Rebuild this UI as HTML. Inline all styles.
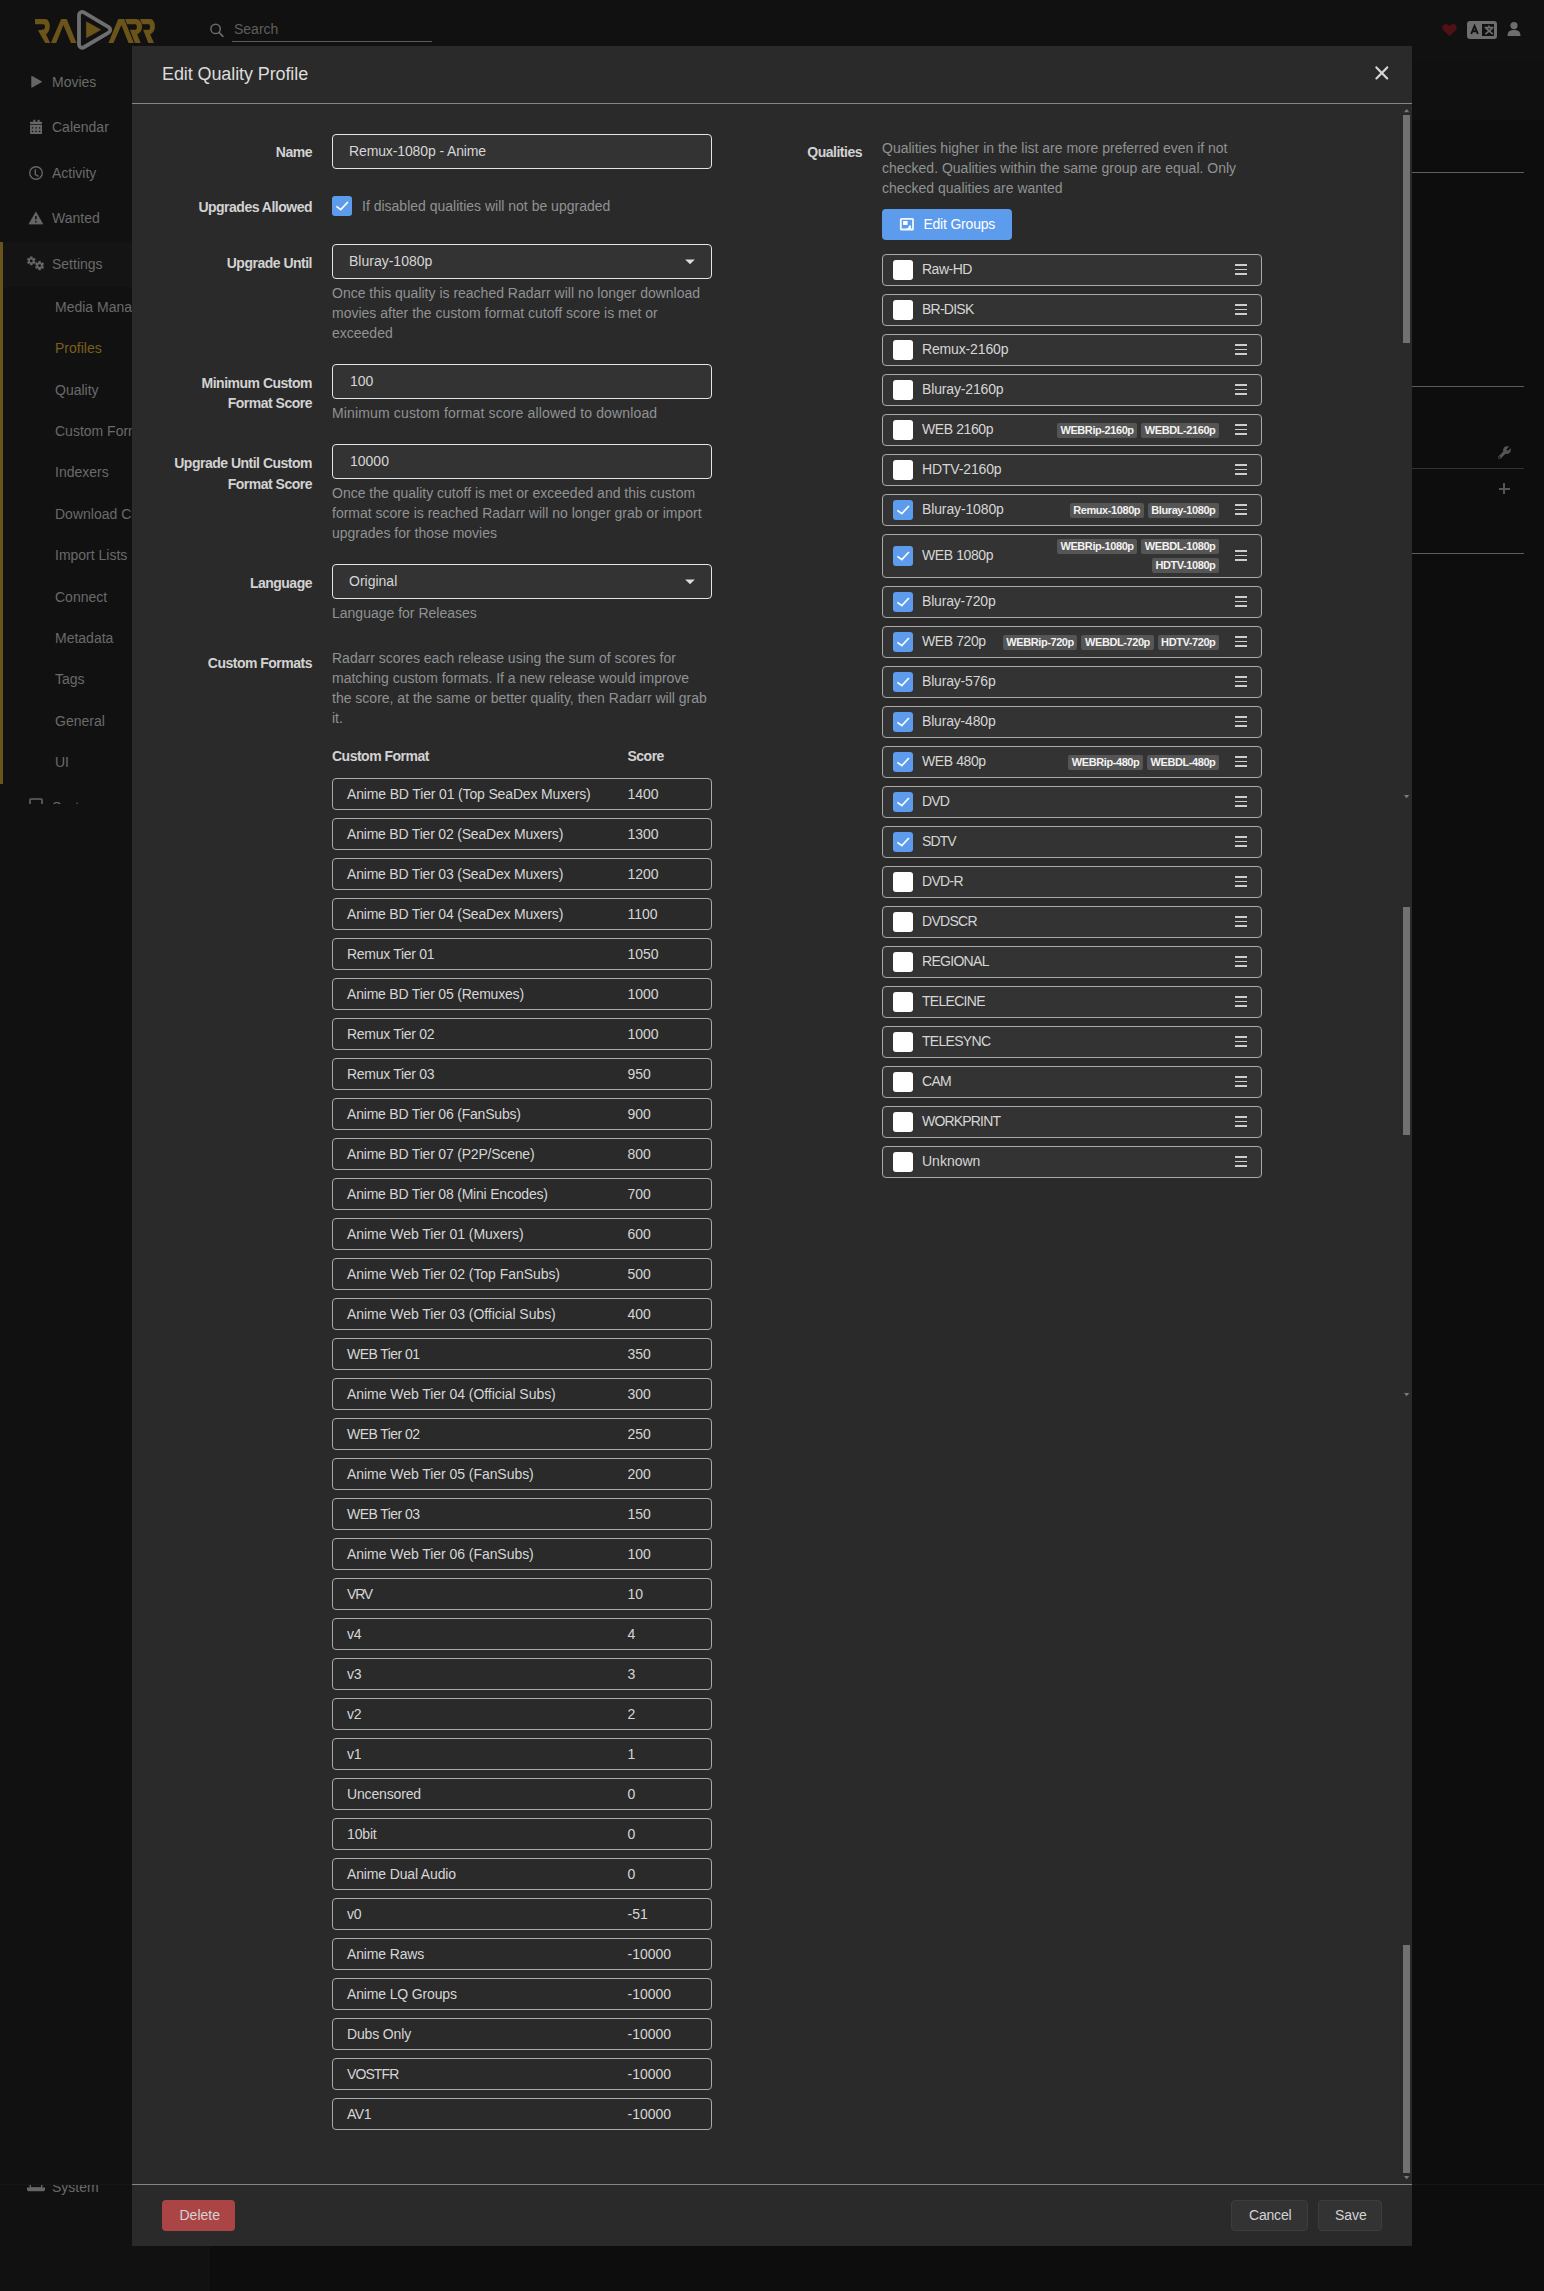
<!DOCTYPE html>
<html><head><meta charset="utf-8"><title>Edit Quality Profile</title>
<style>
html,body{margin:0;padding:0;}
body{width:1544px;height:2291px;background:#0d0d0d;position:relative;overflow:hidden;font-family:"Liberation Sans", sans-serif;}
.t{position:absolute;white-space:nowrap;}
.r{position:absolute;}
.tagrow{position:absolute;display:flex;gap:4px;height:15px;}
.tag{display:block;height:15px;line-height:15px;padding:0 3.6px;background:#555;color:#f2f2f2;font-size:11px;font-weight:700;border-radius:2px;letter-spacing:-0.42px;}
</style></head><body>
<div class="r" style="left:0px;top:0px;width:1544px;height:60px;background:#111111;"></div>
<div class="r" style="left:0px;top:60px;width:210px;height:2231px;background:#111111;"></div>
<div class="r" style="left:210px;top:60px;width:1334px;height:60px;background:#101010;"></div>
<div class="r" style="left:1412px;top:172px;width:112px;height:1px;background:#5e5e5e;"></div>
<div class="r" style="left:1412px;top:386px;width:112px;height:1px;background:#5c5c5c;"></div>
<div class="r" style="left:1412px;top:468px;width:112px;height:1px;background:#333333;"></div>
<div class="r" style="left:1412px;top:553px;width:112px;height:1px;background:#5e5e5e;"></div>
<svg class="r" style="left:1496.5px;top:445px;" width="16" height="16" viewBox="0 0 16 16"><path d="M13.5 3.2 L11.2 5.5 L9.8 5.4 L9.7 4 L12 1.7 C10.3 0.9 8.2 1.3 7 2.7 C6 3.8 5.8 5.3 6.3 6.6 L1.6 11.3 C1 11.9 1 12.9 1.6 13.5 C2.2 14.1 3.2 14.1 3.8 13.5 L8.5 8.8 C9.8 9.3 11.3 9.1 12.4 8.1 C13.8 6.9 14.2 4.9 13.5 3.2 Z" fill="#555"/><circle cx="2.7" cy="12.4" r="0.8" fill="#0d0d0d"/></svg>
<div class="r" style="left:1498.6px;top:488.2px;width:11px;height:1.6px;background:#555;"></div>
<div class="r" style="left:1503.3px;top:483.2px;width:1.6px;height:11.2px;background:#555;"></div>
<svg class="r" style="left:0px;top:0px;" width="200" height="60" viewBox="0 0 200 60">
<path d="M35,19 H45.2 C48,19 49.8,22.5 49.8,26.5 C49.8,30 48.2,32.8 46,34.3 L50.2,43 H45.2 L37.9,30.2 L43.5,29.5 C44.5,29 45,28 45,27 C45,25.3 44.5,24.2 43.5,24.2 H35 Z" fill="#6b5419"/>
<polygon points="50.9,43 61.2,19 66.7,19 76.5,43 71,43 63.4,25 56.2,43" fill="#6b5419"/>
<path d="M83.83,12.36 L108.65,27.05 A3.2,3.2 0 0 1 108.65,32.55 L83.83,47.24 A3.2,3.2 0 0 1 79.00,44.49 L79.00,15.11 A3.2,3.2 0 0 1 83.83,12.36 Z" fill="none" stroke="#6f6f6f" stroke-width="3.8"/>
<polygon points="86.4,21.8 86.4,37.8 100.7,29.8" fill="#6b5419" stroke="#6b5419" stroke-width="0.6" stroke-linejoin="round"/>
<polygon points="108.4,43 118.2,19 124.2,19 133.9,43 128.5,43 121.4,25 113.5,43" fill="#6b5419"/>
<path d="M125,19 H136 C139.5,19 142.05,22.3 142.05,26.5 C142.05,30.2 140,33.3 137.1,34.3 L140.8,43 H134.9 L129.9,29.7 H135.3 C136.2,29.7 136.9,28.5 136.9,27 C136.9,25.5 136.2,24.3 135.3,24.3 H127.1 Z" fill="#6b5419"/>
<path d="M139.9,19 H150.2 C153,19 154.9,22.3 154.9,26.5 C154.9,30.2 153,33.3 150.1,34.3 L154,43 H148.3 L143.1,29.7 H148.8 C149.6,29.7 150,28.5 150,27 C150,25.5 149.6,24.3 148.8,24.3 H142.4 Z" fill="#6b5419"/>
</svg>
<svg class="r" style="left:205px;top:18px;" width="24" height="24" viewBox="0 0 24 24"><circle cx="10.6" cy="10.9" r="4.7" fill="none" stroke="#6a6a6a" stroke-width="1.5"/><line x1="14" y1="14.4" x2="17.9" y2="18.3" stroke="#6a6a6a" stroke-width="1.7" stroke-linecap="round"/></svg>
<div class="t" style="left:234px;top:19.0px;font-size:14px;line-height:20px;color:#5e5e5e;">Search</div>
<div class="r" style="left:232px;top:41px;width:200px;height:1px;background:#5a5a5a;"></div>
<svg class="r" style="left:1441px;top:22px;" width="17" height="16" viewBox="0 0 17 16"><path d="M8.5 14.3 L2.6 8.6 C0.6 6.6 1 3.2 3.6 2.3 C5.4 1.7 7.3 2.5 8.5 4 C9.7 2.5 11.6 1.7 13.4 2.3 C16 3.2 16.4 6.6 14.4 8.6 Z" fill="#4f1016"/></svg>
<div class="r" style="left:1467px;top:21px;width:30px;height:18px;background:#6e6e6e;border-radius:3px"></div>
<div class="r" style="left:1482px;top:24px;width:12px;height:12px;background:#111;"></div>
<svg class="r" style="left:1467px;top:21px;" width="30" height="18" viewBox="0 0 30 18"><path d="M4.2 13 L7.55 4.9 L10.9 13 M5.5 10.2 H9.6" fill="none" stroke="#111" stroke-width="1.9"/><path d="M17.6 6.6 H26.4 M22 4.4 V6.6 M19.2 7.4 L25.8 13.2 M25.2 7.4 L18.4 13.2" fill="none" stroke="#6e6e6e" stroke-width="1.6"/></svg>
<svg class="r" style="left:1506px;top:21px;" width="16" height="16" viewBox="0 0 16 16"><circle cx="8" cy="4.6" r="3.6" fill="#6e6e6e"/><path d="M1.5 15 C1.5 10.5 4 9 8 9 C12 9 14.5 10.5 14.5 15 Z" fill="#6e6e6e"/></svg>
<div class="r" style="left:0px;top:242px;width:3px;height:542px;background:#6b5419;"></div>
<div class="r" style="left:3px;top:242px;width:207px;height:45px;background:#141414;"></div>
<div class="t" style="left:52px;top:72.0px;font-size:14px;line-height:20px;color:#6a6a6a;">Movies</div>
<div class="t" style="left:52px;top:117.0px;font-size:14px;line-height:20px;color:#6a6a6a;">Calendar</div>
<div class="t" style="left:52px;top:163.0px;font-size:14px;line-height:20px;color:#6a6a6a;">Activity</div>
<div class="t" style="left:52px;top:208.0px;font-size:14px;line-height:20px;color:#6a6a6a;">Wanted</div>
<div class="t" style="left:52px;top:254.0px;font-size:14px;line-height:20px;color:#6a6a6a;">Settings</div>
<svg class="r" style="left:28px;top:74px;" width="16" height="16" viewBox="0 0 16 16"><path d="M3.3 2.6 Q3.3 1.6 4.2 2.1 L13.6 7.3 Q14.4 7.8 13.6 8.3 L4.2 13.6 Q3.3 14.1 3.3 13.1 Z" fill="#666"/></svg>
<svg class="r" style="left:28px;top:117px;" width="16" height="18" viewBox="0 0 16 18"><rect x="2.1" y="4.8" width="11.9" height="2.4" fill="#666"/><rect x="5.3" y="2.8" width="2" height="2.5" fill="#666"/><rect x="9.6" y="2.8" width="2" height="2.5" fill="#666"/><rect x="2.1" y="7.9" width="11.9" height="9.1" fill="#666"/><rect x="3.8" y="10.2" width="1.4" height="1.4" fill="#111"/><rect x="3.8" y="13.7" width="1.4" height="1.4" fill="#111"/><rect x="7.4" y="10.2" width="1.4" height="1.4" fill="#111"/><rect x="7.4" y="13.7" width="1.4" height="1.4" fill="#111"/><rect x="10.9" y="10.2" width="1.4" height="1.4" fill="#111"/><rect x="10.9" y="13.7" width="1.4" height="1.4" fill="#111"/></svg>
<svg class="r" style="left:28px;top:165px;" width="16" height="16" viewBox="0 0 16 16"><circle cx="8" cy="8" r="6.3" fill="none" stroke="#666" stroke-width="1.4"/><path d="M7.3 4.2 V9.6 L10.6 11.3" fill="none" stroke="#666" stroke-width="1.4"/></svg>
<svg class="r" style="left:28px;top:210px;" width="16" height="16" viewBox="0 0 16 16"><path d="M7.9 1.9 L14.9 14.1 H0.9 Z" fill="#666" stroke="#666" stroke-width="0.6" stroke-linejoin="round"/><rect x="7.15" y="6" width="1.5" height="3.5" fill="#111"/><rect x="7.15" y="11" width="1.5" height="1.5" fill="#111"/></svg>
<svg class="r" style="left:24px;top:252px;" width="24" height="24" viewBox="0 0 24 24"><polygon points="6.33,4.71 8.27,4.71 8.40,6.19 9.10,6.60 10.44,5.97 11.41,7.64 10.20,8.49 10.20,9.31 11.41,10.16 10.44,11.83 9.10,11.20 8.40,11.61 8.27,13.09 6.33,13.09 6.20,11.61 5.50,11.20 4.16,11.83 3.19,10.16 4.40,9.31 4.40,8.49 3.19,7.64 4.16,5.97 5.50,6.60 6.20,6.19" fill="#666" stroke="#666" stroke-width="0.5" stroke-linejoin="round"/><circle cx="7.3" cy="8.9" r="1.35" fill="#111"/><polygon points="14.59,9.22 16.61,9.22 16.75,10.76 17.48,11.19 18.89,10.53 19.90,12.28 18.63,13.17 18.63,14.03 19.90,14.92 18.89,16.67 17.48,16.01 16.75,16.44 16.61,17.98 14.59,17.98 14.45,16.44 13.72,16.01 12.31,16.67 11.30,14.92 12.57,14.03 12.57,13.17 11.30,12.28 12.31,10.53 13.72,11.19 14.45,10.76" fill="#666" stroke="#666" stroke-width="0.5" stroke-linejoin="round"/><circle cx="15.6" cy="13.6" r="1.35" fill="#111"/></svg>
<div class="t" style="left:55px;top:297.0px;font-size:14px;line-height:20px;color:#6a6a6a;">Media Management</div>
<div class="t" style="left:55px;top:338.0px;font-size:14px;line-height:20px;color:#7a5f1c;">Profiles</div>
<div class="t" style="left:55px;top:380.0px;font-size:14px;line-height:20px;color:#6a6a6a;">Quality</div>
<div class="t" style="left:55px;top:421.0px;font-size:14px;line-height:20px;color:#6a6a6a;">Custom Formats</div>
<div class="t" style="left:55px;top:462.0px;font-size:14px;line-height:20px;color:#6a6a6a;">Indexers</div>
<div class="t" style="left:55px;top:504.0px;font-size:14px;line-height:20px;color:#6a6a6a;">Download Clients</div>
<div class="t" style="left:55px;top:545.0px;font-size:14px;line-height:20px;color:#6a6a6a;">Import Lists</div>
<div class="t" style="left:55px;top:587.0px;font-size:14px;line-height:20px;color:#6a6a6a;">Connect</div>
<div class="t" style="left:55px;top:628.0px;font-size:14px;line-height:20px;color:#6a6a6a;">Metadata</div>
<div class="t" style="left:55px;top:669.0px;font-size:14px;line-height:20px;color:#6a6a6a;">Tags</div>
<div class="t" style="left:55px;top:711.0px;font-size:14px;line-height:20px;color:#6a6a6a;">General</div>
<div class="t" style="left:55px;top:752.0px;font-size:14px;line-height:20px;color:#6a6a6a;">UI</div>
<div class="r" style="left:0;top:784px;width:132px;height:20px;overflow:hidden">
<svg class="r" style="left:28px;top:14px" width="16" height="16" viewBox="0 0 16 16"><rect x="2" y="1" width="12" height="9" rx="1" fill="none" stroke="#666" stroke-width="1.6"/></svg>
<div class="t" style="left:52px;top:12.5px;font-size:14px;line-height:20px;color:#6a6a6a">System</div>
</div>
<div class="r" style="left:0px;top:2184px;width:1544px;height:1px;background:#171717;"></div>
<div class="r" style="left:0;top:2185px;width:132px;height:20px;overflow:hidden">
<svg class="r" style="left:27px;top:-11px" width="18" height="20" viewBox="0 0 18 20"><rect x="3.3" y="5" width="11.4" height="9" fill="none" stroke="#666" stroke-width="1.4"/><path d="M0 13.6 H18 V15.6 Q18 17.2 16.4 17.2 H1.6 Q0 17.2 0 15.6 Z" fill="#666"/></svg>
<div class="t" style="left:52px;top:-8px;font-size:14px;line-height:20px;color:#6a6a6a">System</div>
</div>
<div class="r" style="left:132px;top:46px;width:1280px;height:2200px;background:#2a2a2a;"></div>
<div class="t" style="left:162px;top:62.0px;font-size:18px;line-height:24px;color:#dcdcdc;letter-spacing:-0.1px;">Edit Quality Profile</div>
<svg class="r" style="left:1373px;top:65px;" width="16" height="16" viewBox="0 0 16 16"><path d="M3.4 2.4 L14.2 13.4 M14.2 2.4 L3.4 13.4" stroke="#d6d6d6" stroke-width="2.2" stroke-linecap="round"/></svg>
<div class="r" style="left:132px;top:103px;width:1280px;height:1px;background:#858585;"></div>
<div class="r" style="left:132px;top:2184px;width:1280px;height:1px;background:#858585;"></div>
<div class="r" style="left:1403px;top:115px;width:7px;height:228px;background:#717171;"></div>
<div class="r" style="left:1403px;top:907px;width:7px;height:228px;background:#717171;"></div>
<div class="r" style="left:1403px;top:1945px;width:7px;height:228px;background:#717171;"></div>
<svg class="r" style="left:1404px;top:108.9px;overflow:visible" width="5.3" height="3.2" viewBox="0 0 5.3 3.2"><polygon points="0,3.2 5.3,3.2 2.65,0" fill="#7a7a7a"/></svg>
<svg class="r" style="left:1404px;top:794.8px;overflow:visible" width="5.3" height="3.2" viewBox="0 0 5.3 3.2"><polygon points="0,0 5.3,0 2.65,3.2" fill="#7a7a7a"/></svg>
<svg class="r" style="left:1404px;top:1392.9px;overflow:visible" width="5.3" height="3.2" viewBox="0 0 5.3 3.2"><polygon points="0,0 5.3,0 2.65,3.2" fill="#7a7a7a"/></svg>
<svg class="r" style="left:1404px;top:2175.9px;overflow:visible" width="5.3" height="3.2" viewBox="0 0 5.3 3.2"><polygon points="0,0 5.3,0 2.65,3.2" fill="#7a7a7a"/></svg>
<div class="r" style="left:162px;top:2200px;width:73px;height:31px;background:#ab4545;border-radius:4px"></div>
<div class="t" style="left:179.5px;top:2205.0px;font-size:14px;line-height:20px;color:#d4d4d4;">Delete</div>
<div class="r" style="left:1231px;top:2200px;width:77px;height:31px;background:#333;border:1px solid #393e45;box-sizing:border-box;border-radius:4px"></div>
<div class="t" style="left:1249px;top:2205.0px;font-size:14px;line-height:20px;color:#d4d4d4;letter-spacing:-0.2px;">Cancel</div>
<div class="r" style="left:1318px;top:2200px;width:64px;height:31px;background:#333;border:1px solid #393e45;box-sizing:border-box;border-radius:4px"></div>
<div class="t" style="left:1335px;top:2205.0px;font-size:14px;line-height:20px;color:#d4d4d4;">Save</div>
<div class="t" style="right:1232px;top:142.0px;font-size:14px;line-height:20px;color:#d2d2d2;font-weight:700;letter-spacing:-0.5px;">Name</div>
<div class="r" style="left:332px;top:134px;width:380px;height:35px;background:#333;border:1px solid #dde6e9;box-sizing:border-box;border-radius:4px"></div>
<div class="t" style="left:349px;top:141.0px;font-size:14px;line-height:20px;color:#d6d6d6;letter-spacing:-0.12px;">Remux-1080p - Anime</div>
<div class="t" style="right:1232px;top:197.0px;font-size:14px;line-height:20px;color:#d2d2d2;font-weight:700;letter-spacing:-0.5px;">Upgrades Allowed</div>
<div class="r" style="left:332px;top:196px;width:20px;height:20px;background:#5d9cec;border-radius:3px"></div>
<svg class="r" style="left:332px;top:196px;" width="20" height="20" viewBox="0 0 20 20"><path d="M4.4 10.4 L8.8 13.7 L15.9 6" fill="none" stroke="#fff" stroke-width="1.7"/></svg>
<div class="t" style="left:362px;top:196.0px;font-size:14px;line-height:20px;color:#909293;">If disabled qualities will not be upgraded</div>
<div class="t" style="right:1232px;top:252.5px;font-size:14px;line-height:20px;color:#d2d2d2;font-weight:700;letter-spacing:-0.5px;">Upgrade Until</div>
<div class="r" style="left:332px;top:244px;width:380px;height:35px;background:#333;border:1px solid #dde6e9;box-sizing:border-box;border-radius:4px"></div>
<div class="t" style="left:349px;top:251.0px;font-size:14px;line-height:20px;color:#d6d6d6;">Bluray-1080p</div>
<svg class="r" style="left:684px;top:258px;" width="12" height="8" viewBox="0 0 12 8"><polygon points="1.2,1.5 10.8,1.5 6,6.3" fill="#dcdcdc"/></svg>
<div class="t" style="left:332px;top:283.0px;font-size:14px;line-height:20px;color:#909293;">Once this quality is reached Radarr will no longer download</div>
<div class="t" style="left:332px;top:303.0px;font-size:14px;line-height:20px;color:#909293;">movies after the custom format cutoff score is met or</div>
<div class="t" style="left:332px;top:323.0px;font-size:14px;line-height:20px;color:#909293;">exceeded</div>
<div class="t" style="right:1232px;top:372.6px;font-size:14px;line-height:20px;color:#d2d2d2;font-weight:700;letter-spacing:-0.5px;">Minimum Custom</div>
<div class="t" style="right:1232px;top:393.4px;font-size:14px;line-height:20px;color:#d2d2d2;font-weight:700;letter-spacing:-0.5px;">Format Score</div>
<div class="r" style="left:332px;top:364px;width:380px;height:35px;background:#333;border:1px solid #dde6e9;box-sizing:border-box;border-radius:4px"></div>
<div class="t" style="left:350px;top:371.0px;font-size:14px;line-height:20px;color:#d6d6d6;">100</div>
<div class="t" style="left:332px;top:403.0px;font-size:14px;line-height:20px;color:#909293;letter-spacing:0.15px;">Minimum custom format score allowed to download</div>
<div class="t" style="right:1232px;top:453.4px;font-size:14px;line-height:20px;color:#d2d2d2;font-weight:700;letter-spacing:-0.5px;">Upgrade Until Custom</div>
<div class="t" style="right:1232px;top:474.0px;font-size:14px;line-height:20px;color:#d2d2d2;font-weight:700;letter-spacing:-0.5px;">Format Score</div>
<div class="r" style="left:332px;top:444px;width:380px;height:35px;background:#333;border:1px solid #dde6e9;box-sizing:border-box;border-radius:4px"></div>
<div class="t" style="left:350px;top:451.0px;font-size:14px;line-height:20px;color:#d6d6d6;">10000</div>
<div class="t" style="left:332px;top:483.0px;font-size:14px;line-height:20px;color:#909293;">Once the quality cutoff is met or exceeded and this custom</div>
<div class="t" style="left:332px;top:503.0px;font-size:14px;line-height:20px;color:#909293;">format score is reached Radarr will no longer grab or import</div>
<div class="t" style="left:332px;top:523.0px;font-size:14px;line-height:20px;color:#909293;">upgrades for those movies</div>
<div class="t" style="right:1232px;top:573.0px;font-size:14px;line-height:20px;color:#d2d2d2;font-weight:700;letter-spacing:-0.5px;">Language</div>
<div class="r" style="left:332px;top:564px;width:380px;height:35px;background:#333;border:1px solid #dde6e9;box-sizing:border-box;border-radius:4px"></div>
<div class="t" style="left:349px;top:571.0px;font-size:14px;line-height:20px;color:#d6d6d6;">Original</div>
<svg class="r" style="left:684px;top:578px;" width="12" height="8" viewBox="0 0 12 8"><polygon points="1.2,1.5 10.8,1.5 6,6.3" fill="#dcdcdc"/></svg>
<div class="t" style="left:332px;top:603.0px;font-size:14px;line-height:20px;color:#909293;">Language for Releases</div>
<div class="t" style="right:1232px;top:653.0px;font-size:14px;line-height:20px;color:#d2d2d2;font-weight:700;letter-spacing:-0.5px;">Custom Formats</div>
<div class="t" style="left:332px;top:648.0px;font-size:14px;line-height:20px;color:#909293;">Radarr scores each release using the sum of scores for</div>
<div class="t" style="left:332px;top:668.0px;font-size:14px;line-height:20px;color:#909293;">matching custom formats. If a new release would improve</div>
<div class="t" style="left:332px;top:688.0px;font-size:14px;line-height:20px;color:#909293;">the score, at the same or better quality, then Radarr will grab</div>
<div class="t" style="left:332px;top:708.0px;font-size:14px;line-height:20px;color:#909293;">it.</div>
<div class="t" style="left:332px;top:746.0px;font-size:14px;line-height:20px;color:#d2d2d2;font-weight:700;letter-spacing:-0.5px;">Custom Format</div>
<div class="t" style="left:627.5px;top:746.0px;font-size:14px;line-height:20px;color:#d2d2d2;font-weight:700;letter-spacing:-0.5px;">Score</div>
<div class="r" style="left:332px;top:778px;width:380px;height:32px;background:#2a2a2a;border:1px solid #aaa;box-sizing:border-box;border-radius:4px"></div>
<div class="t" style="left:347px;top:783.5px;font-size:14px;line-height:20px;color:#d6d6d6;letter-spacing:-0.15px;">Anime BD Tier 01 (Top SeaDex Muxers)</div>
<div class="t" style="left:627.5px;top:783.5px;font-size:14px;line-height:20px;color:#d6d6d6;">1400</div>
<div class="r" style="left:332px;top:818px;width:380px;height:32px;background:#2a2a2a;border:1px solid #aaa;box-sizing:border-box;border-radius:4px"></div>
<div class="t" style="left:347px;top:823.5px;font-size:14px;line-height:20px;color:#d6d6d6;letter-spacing:-0.2px;">Anime BD Tier 02 (SeaDex Muxers)</div>
<div class="t" style="left:627.5px;top:823.5px;font-size:14px;line-height:20px;color:#d6d6d6;">1300</div>
<div class="r" style="left:332px;top:858px;width:380px;height:32px;background:#2a2a2a;border:1px solid #aaa;box-sizing:border-box;border-radius:4px"></div>
<div class="t" style="left:347px;top:863.5px;font-size:14px;line-height:20px;color:#d6d6d6;letter-spacing:-0.2px;">Anime BD Tier 03 (SeaDex Muxers)</div>
<div class="t" style="left:627.5px;top:863.5px;font-size:14px;line-height:20px;color:#d6d6d6;">1200</div>
<div class="r" style="left:332px;top:898px;width:380px;height:32px;background:#2a2a2a;border:1px solid #aaa;box-sizing:border-box;border-radius:4px"></div>
<div class="t" style="left:347px;top:903.5px;font-size:14px;line-height:20px;color:#d6d6d6;letter-spacing:-0.2px;">Anime BD Tier 04 (SeaDex Muxers)</div>
<div class="t" style="left:627.5px;top:903.5px;font-size:14px;line-height:20px;color:#d6d6d6;">1100</div>
<div class="r" style="left:332px;top:938px;width:380px;height:32px;background:#2a2a2a;border:1px solid #aaa;box-sizing:border-box;border-radius:4px"></div>
<div class="t" style="left:347px;top:943.5px;font-size:14px;line-height:20px;color:#d6d6d6;letter-spacing:-0.3px;">Remux Tier 01</div>
<div class="t" style="left:627.5px;top:943.5px;font-size:14px;line-height:20px;color:#d6d6d6;">1050</div>
<div class="r" style="left:332px;top:978px;width:380px;height:32px;background:#2a2a2a;border:1px solid #aaa;box-sizing:border-box;border-radius:4px"></div>
<div class="t" style="left:347px;top:983.5px;font-size:14px;line-height:20px;color:#d6d6d6;letter-spacing:-0.2px;">Anime BD Tier 05 (Remuxes)</div>
<div class="t" style="left:627.5px;top:983.5px;font-size:14px;line-height:20px;color:#d6d6d6;">1000</div>
<div class="r" style="left:332px;top:1018px;width:380px;height:32px;background:#2a2a2a;border:1px solid #aaa;box-sizing:border-box;border-radius:4px"></div>
<div class="t" style="left:347px;top:1023.5px;font-size:14px;line-height:20px;color:#d6d6d6;letter-spacing:-0.3px;">Remux Tier 02</div>
<div class="t" style="left:627.5px;top:1023.5px;font-size:14px;line-height:20px;color:#d6d6d6;">1000</div>
<div class="r" style="left:332px;top:1058px;width:380px;height:32px;background:#2a2a2a;border:1px solid #aaa;box-sizing:border-box;border-radius:4px"></div>
<div class="t" style="left:347px;top:1063.5px;font-size:14px;line-height:20px;color:#d6d6d6;letter-spacing:-0.3px;">Remux Tier 03</div>
<div class="t" style="left:627.5px;top:1063.5px;font-size:14px;line-height:20px;color:#d6d6d6;">950</div>
<div class="r" style="left:332px;top:1098px;width:380px;height:32px;background:#2a2a2a;border:1px solid #aaa;box-sizing:border-box;border-radius:4px"></div>
<div class="t" style="left:347px;top:1103.5px;font-size:14px;line-height:20px;color:#d6d6d6;letter-spacing:-0.2px;">Anime BD Tier 06 (FanSubs)</div>
<div class="t" style="left:627.5px;top:1103.5px;font-size:14px;line-height:20px;color:#d6d6d6;">900</div>
<div class="r" style="left:332px;top:1138px;width:380px;height:32px;background:#2a2a2a;border:1px solid #aaa;box-sizing:border-box;border-radius:4px"></div>
<div class="t" style="left:347px;top:1143.5px;font-size:14px;line-height:20px;color:#d6d6d6;letter-spacing:-0.2px;">Anime BD Tier 07 (P2P/Scene)</div>
<div class="t" style="left:627.5px;top:1143.5px;font-size:14px;line-height:20px;color:#d6d6d6;">800</div>
<div class="r" style="left:332px;top:1178px;width:380px;height:32px;background:#2a2a2a;border:1px solid #aaa;box-sizing:border-box;border-radius:4px"></div>
<div class="t" style="left:347px;top:1183.5px;font-size:14px;line-height:20px;color:#d6d6d6;letter-spacing:-0.2px;">Anime BD Tier 08 (Mini Encodes)</div>
<div class="t" style="left:627.5px;top:1183.5px;font-size:14px;line-height:20px;color:#d6d6d6;">700</div>
<div class="r" style="left:332px;top:1218px;width:380px;height:32px;background:#2a2a2a;border:1px solid #aaa;box-sizing:border-box;border-radius:4px"></div>
<div class="t" style="left:347px;top:1223.5px;font-size:14px;line-height:20px;color:#d6d6d6;letter-spacing:-0.05px;">Anime Web Tier 01 (Muxers)</div>
<div class="t" style="left:627.5px;top:1223.5px;font-size:14px;line-height:20px;color:#d6d6d6;">600</div>
<div class="r" style="left:332px;top:1258px;width:380px;height:32px;background:#2a2a2a;border:1px solid #aaa;box-sizing:border-box;border-radius:4px"></div>
<div class="t" style="left:347px;top:1263.5px;font-size:14px;line-height:20px;color:#d6d6d6;letter-spacing:-0.05px;">Anime Web Tier 02 (Top FanSubs)</div>
<div class="t" style="left:627.5px;top:1263.5px;font-size:14px;line-height:20px;color:#d6d6d6;">500</div>
<div class="r" style="left:332px;top:1298px;width:380px;height:32px;background:#2a2a2a;border:1px solid #aaa;box-sizing:border-box;border-radius:4px"></div>
<div class="t" style="left:347px;top:1303.5px;font-size:14px;line-height:20px;color:#d6d6d6;letter-spacing:-0.05px;">Anime Web Tier 03 (Official Subs)</div>
<div class="t" style="left:627.5px;top:1303.5px;font-size:14px;line-height:20px;color:#d6d6d6;">400</div>
<div class="r" style="left:332px;top:1338px;width:380px;height:32px;background:#2a2a2a;border:1px solid #aaa;box-sizing:border-box;border-radius:4px"></div>
<div class="t" style="left:347px;top:1343.5px;font-size:14px;line-height:20px;color:#d6d6d6;letter-spacing:-0.55px;">WEB Tier 01</div>
<div class="t" style="left:627.5px;top:1343.5px;font-size:14px;line-height:20px;color:#d6d6d6;">350</div>
<div class="r" style="left:332px;top:1378px;width:380px;height:32px;background:#2a2a2a;border:1px solid #aaa;box-sizing:border-box;border-radius:4px"></div>
<div class="t" style="left:347px;top:1383.5px;font-size:14px;line-height:20px;color:#d6d6d6;letter-spacing:-0.05px;">Anime Web Tier 04 (Official Subs)</div>
<div class="t" style="left:627.5px;top:1383.5px;font-size:14px;line-height:20px;color:#d6d6d6;">300</div>
<div class="r" style="left:332px;top:1418px;width:380px;height:32px;background:#2a2a2a;border:1px solid #aaa;box-sizing:border-box;border-radius:4px"></div>
<div class="t" style="left:347px;top:1423.5px;font-size:14px;line-height:20px;color:#d6d6d6;letter-spacing:-0.55px;">WEB Tier 02</div>
<div class="t" style="left:627.5px;top:1423.5px;font-size:14px;line-height:20px;color:#d6d6d6;">250</div>
<div class="r" style="left:332px;top:1458px;width:380px;height:32px;background:#2a2a2a;border:1px solid #aaa;box-sizing:border-box;border-radius:4px"></div>
<div class="t" style="left:347px;top:1463.5px;font-size:14px;line-height:20px;color:#d6d6d6;letter-spacing:-0.05px;">Anime Web Tier 05 (FanSubs)</div>
<div class="t" style="left:627.5px;top:1463.5px;font-size:14px;line-height:20px;color:#d6d6d6;">200</div>
<div class="r" style="left:332px;top:1498px;width:380px;height:32px;background:#2a2a2a;border:1px solid #aaa;box-sizing:border-box;border-radius:4px"></div>
<div class="t" style="left:347px;top:1503.5px;font-size:14px;line-height:20px;color:#d6d6d6;letter-spacing:-0.55px;">WEB Tier 03</div>
<div class="t" style="left:627.5px;top:1503.5px;font-size:14px;line-height:20px;color:#d6d6d6;">150</div>
<div class="r" style="left:332px;top:1538px;width:380px;height:32px;background:#2a2a2a;border:1px solid #aaa;box-sizing:border-box;border-radius:4px"></div>
<div class="t" style="left:347px;top:1543.5px;font-size:14px;line-height:20px;color:#d6d6d6;letter-spacing:-0.05px;">Anime Web Tier 06 (FanSubs)</div>
<div class="t" style="left:627.5px;top:1543.5px;font-size:14px;line-height:20px;color:#d6d6d6;">100</div>
<div class="r" style="left:332px;top:1578px;width:380px;height:32px;background:#2a2a2a;border:1px solid #aaa;box-sizing:border-box;border-radius:4px"></div>
<div class="t" style="left:347px;top:1583.5px;font-size:14px;line-height:20px;color:#d6d6d6;letter-spacing:-1.2px;">VRV</div>
<div class="t" style="left:627.5px;top:1583.5px;font-size:14px;line-height:20px;color:#d6d6d6;">10</div>
<div class="r" style="left:332px;top:1618px;width:380px;height:32px;background:#2a2a2a;border:1px solid #aaa;box-sizing:border-box;border-radius:4px"></div>
<div class="t" style="left:347px;top:1623.5px;font-size:14px;line-height:20px;color:#d6d6d6;letter-spacing:-0.3px;">v4</div>
<div class="t" style="left:627.5px;top:1623.5px;font-size:14px;line-height:20px;color:#d6d6d6;">4</div>
<div class="r" style="left:332px;top:1658px;width:380px;height:32px;background:#2a2a2a;border:1px solid #aaa;box-sizing:border-box;border-radius:4px"></div>
<div class="t" style="left:347px;top:1663.5px;font-size:14px;line-height:20px;color:#d6d6d6;letter-spacing:-0.3px;">v3</div>
<div class="t" style="left:627.5px;top:1663.5px;font-size:14px;line-height:20px;color:#d6d6d6;">3</div>
<div class="r" style="left:332px;top:1698px;width:380px;height:32px;background:#2a2a2a;border:1px solid #aaa;box-sizing:border-box;border-radius:4px"></div>
<div class="t" style="left:347px;top:1703.5px;font-size:14px;line-height:20px;color:#d6d6d6;letter-spacing:-0.3px;">v2</div>
<div class="t" style="left:627.5px;top:1703.5px;font-size:14px;line-height:20px;color:#d6d6d6;">2</div>
<div class="r" style="left:332px;top:1738px;width:380px;height:32px;background:#2a2a2a;border:1px solid #aaa;box-sizing:border-box;border-radius:4px"></div>
<div class="t" style="left:347px;top:1743.5px;font-size:14px;line-height:20px;color:#d6d6d6;letter-spacing:-0.3px;">v1</div>
<div class="t" style="left:627.5px;top:1743.5px;font-size:14px;line-height:20px;color:#d6d6d6;">1</div>
<div class="r" style="left:332px;top:1778px;width:380px;height:32px;background:#2a2a2a;border:1px solid #aaa;box-sizing:border-box;border-radius:4px"></div>
<div class="t" style="left:347px;top:1783.5px;font-size:14px;line-height:20px;color:#d6d6d6;letter-spacing:-0.15px;">Uncensored</div>
<div class="t" style="left:627.5px;top:1783.5px;font-size:14px;line-height:20px;color:#d6d6d6;">0</div>
<div class="r" style="left:332px;top:1818px;width:380px;height:32px;background:#2a2a2a;border:1px solid #aaa;box-sizing:border-box;border-radius:4px"></div>
<div class="t" style="left:347px;top:1823.5px;font-size:14px;line-height:20px;color:#d6d6d6;letter-spacing:-0.15px;">10bit</div>
<div class="t" style="left:627.5px;top:1823.5px;font-size:14px;line-height:20px;color:#d6d6d6;">0</div>
<div class="r" style="left:332px;top:1858px;width:380px;height:32px;background:#2a2a2a;border:1px solid #aaa;box-sizing:border-box;border-radius:4px"></div>
<div class="t" style="left:347px;top:1863.5px;font-size:14px;line-height:20px;color:#d6d6d6;letter-spacing:-0.15px;">Anime Dual Audio</div>
<div class="t" style="left:627.5px;top:1863.5px;font-size:14px;line-height:20px;color:#d6d6d6;">0</div>
<div class="r" style="left:332px;top:1898px;width:380px;height:32px;background:#2a2a2a;border:1px solid #aaa;box-sizing:border-box;border-radius:4px"></div>
<div class="t" style="left:347px;top:1903.5px;font-size:14px;line-height:20px;color:#d6d6d6;letter-spacing:-0.3px;">v0</div>
<div class="t" style="left:627.5px;top:1903.5px;font-size:14px;line-height:20px;color:#d6d6d6;">-51</div>
<div class="r" style="left:332px;top:1938px;width:380px;height:32px;background:#2a2a2a;border:1px solid #aaa;box-sizing:border-box;border-radius:4px"></div>
<div class="t" style="left:347px;top:1943.5px;font-size:14px;line-height:20px;color:#d6d6d6;letter-spacing:-0.15px;">Anime Raws</div>
<div class="t" style="left:627.5px;top:1943.5px;font-size:14px;line-height:20px;color:#d6d6d6;">-10000</div>
<div class="r" style="left:332px;top:1978px;width:380px;height:32px;background:#2a2a2a;border:1px solid #aaa;box-sizing:border-box;border-radius:4px"></div>
<div class="t" style="left:347px;top:1983.5px;font-size:14px;line-height:20px;color:#d6d6d6;letter-spacing:-0.15px;">Anime LQ Groups</div>
<div class="t" style="left:627.5px;top:1983.5px;font-size:14px;line-height:20px;color:#d6d6d6;">-10000</div>
<div class="r" style="left:332px;top:2018px;width:380px;height:32px;background:#2a2a2a;border:1px solid #aaa;box-sizing:border-box;border-radius:4px"></div>
<div class="t" style="left:347px;top:2023.5px;font-size:14px;line-height:20px;color:#d6d6d6;letter-spacing:-0.15px;">Dubs Only</div>
<div class="t" style="left:627.5px;top:2023.5px;font-size:14px;line-height:20px;color:#d6d6d6;">-10000</div>
<div class="r" style="left:332px;top:2058px;width:380px;height:32px;background:#2a2a2a;border:1px solid #aaa;box-sizing:border-box;border-radius:4px"></div>
<div class="t" style="left:347px;top:2063.5px;font-size:14px;line-height:20px;color:#d6d6d6;letter-spacing:-0.9px;">VOSTFR</div>
<div class="t" style="left:627.5px;top:2063.5px;font-size:14px;line-height:20px;color:#d6d6d6;">-10000</div>
<div class="r" style="left:332px;top:2098px;width:380px;height:32px;background:#2a2a2a;border:1px solid #aaa;box-sizing:border-box;border-radius:4px"></div>
<div class="t" style="left:347px;top:2103.5px;font-size:14px;line-height:20px;color:#d6d6d6;letter-spacing:-0.5px;">AV1</div>
<div class="t" style="left:627.5px;top:2103.5px;font-size:14px;line-height:20px;color:#d6d6d6;">-10000</div>
<div class="t" style="right:682px;top:142.0px;font-size:14px;line-height:20px;color:#d2d2d2;font-weight:700;letter-spacing:-0.5px;">Qualities</div>
<div class="t" style="left:882px;top:138.4px;font-size:14px;line-height:20px;color:#909293;">Qualities higher in the list are more preferred even if not</div>
<div class="t" style="left:882px;top:158.4px;font-size:14px;line-height:20px;color:#909293;">checked. Qualities within the same group are equal. Only</div>
<div class="t" style="left:882px;top:178.4px;font-size:14px;line-height:20px;color:#909293;">checked qualities are wanted</div>
<div class="r" style="left:882px;top:209px;width:130px;height:31px;background:#5d9cec;border-radius:4px"></div>
<svg class="r" style="left:899px;top:217px;" width="16" height="14" viewBox="0 0 16 14"><rect x="1.8" y="1.9" width="12.2" height="10.6" rx="0.6" fill="none" stroke="#f4f8fe" stroke-width="1.8"/><rect x="4.1" y="3.9" width="4.5" height="4.1" rx="0.5" fill="#fff"/><path d="M7.3 11.6 Q9.4 11.4 9.8 9.3 Q10 8.2 10.8 8.2 Q11.9 8.2 11.9 9.2 V11.2 Q11.9 12.2 11 12.2 H7.8 Q7 12.1 7.3 11.6 Z" fill="#fff"/></svg>
<div class="t" style="left:923.4px;top:214.0px;font-size:14px;line-height:20px;color:#ffffff;letter-spacing:-0.2px;">Edit Groups</div>
<div class="r" style="left:882px;top:254px;width:380px;height:32px;background:#333;border:1px solid #aaa;box-sizing:border-box;border-radius:4px"></div>
<div class="r" style="left:893px;top:260.0px;width:20px;height:20px;background:#ffffff;border-radius:3px"></div>
<div class="t" style="left:922px;top:259.0px;font-size:14px;line-height:20px;color:#d6d6d6;letter-spacing:-0.5px;">Raw-HD</div>
<div class="r" style="left:1235px;top:264.4px;width:12px;height:1.6px;background:#cdcdcd;"></div>
<div class="r" style="left:1235px;top:268.79999999999995px;width:12px;height:1.6px;background:#cdcdcd;"></div>
<div class="r" style="left:1235px;top:273.2px;width:12px;height:1.6px;background:#cdcdcd;"></div>
<div class="r" style="left:882px;top:294px;width:380px;height:32px;background:#333;border:1px solid #aaa;box-sizing:border-box;border-radius:4px"></div>
<div class="r" style="left:893px;top:300.0px;width:20px;height:20px;background:#ffffff;border-radius:3px"></div>
<div class="t" style="left:922px;top:299.0px;font-size:14px;line-height:20px;color:#d6d6d6;letter-spacing:-0.75px;">BR-DISK</div>
<div class="r" style="left:1235px;top:304.4px;width:12px;height:1.6px;background:#cdcdcd;"></div>
<div class="r" style="left:1235px;top:308.79999999999995px;width:12px;height:1.6px;background:#cdcdcd;"></div>
<div class="r" style="left:1235px;top:313.2px;width:12px;height:1.6px;background:#cdcdcd;"></div>
<div class="r" style="left:882px;top:334px;width:380px;height:32px;background:#333;border:1px solid #aaa;box-sizing:border-box;border-radius:4px"></div>
<div class="r" style="left:893px;top:340.0px;width:20px;height:20px;background:#ffffff;border-radius:3px"></div>
<div class="t" style="left:922px;top:339.0px;font-size:14px;line-height:20px;color:#d6d6d6;letter-spacing:-0.15px;">Remux-2160p</div>
<div class="r" style="left:1235px;top:344.4px;width:12px;height:1.6px;background:#cdcdcd;"></div>
<div class="r" style="left:1235px;top:348.79999999999995px;width:12px;height:1.6px;background:#cdcdcd;"></div>
<div class="r" style="left:1235px;top:353.2px;width:12px;height:1.6px;background:#cdcdcd;"></div>
<div class="r" style="left:882px;top:374px;width:380px;height:32px;background:#333;border:1px solid #aaa;box-sizing:border-box;border-radius:4px"></div>
<div class="r" style="left:893px;top:380.0px;width:20px;height:20px;background:#ffffff;border-radius:3px"></div>
<div class="t" style="left:922px;top:379.0px;font-size:14px;line-height:20px;color:#d6d6d6;letter-spacing:-0.15px;">Bluray-2160p</div>
<div class="r" style="left:1235px;top:384.4px;width:12px;height:1.6px;background:#cdcdcd;"></div>
<div class="r" style="left:1235px;top:388.79999999999995px;width:12px;height:1.6px;background:#cdcdcd;"></div>
<div class="r" style="left:1235px;top:393.2px;width:12px;height:1.6px;background:#cdcdcd;"></div>
<div class="r" style="left:882px;top:414px;width:380px;height:32px;background:#333;border:1px solid #aaa;box-sizing:border-box;border-radius:4px"></div>
<div class="r" style="left:893px;top:420.0px;width:20px;height:20px;background:#ffffff;border-radius:3px"></div>
<div class="t" style="left:922px;top:419.0px;font-size:14px;line-height:20px;color:#d6d6d6;letter-spacing:-0.4px;">WEB 2160p</div>
<div class="r" style="left:1235px;top:424.4px;width:12px;height:1.6px;background:#cdcdcd;"></div>
<div class="r" style="left:1235px;top:428.79999999999995px;width:12px;height:1.6px;background:#cdcdcd;"></div>
<div class="r" style="left:1235px;top:433.2px;width:12px;height:1.6px;background:#cdcdcd;"></div>
<div class="tagrow" style="right:325px;top:422.5px"><span class="tag">WEBRip-2160p</span><span class="tag">WEBDL-2160p</span></div>
<div class="r" style="left:882px;top:454px;width:380px;height:32px;background:#333;border:1px solid #aaa;box-sizing:border-box;border-radius:4px"></div>
<div class="r" style="left:893px;top:460.0px;width:20px;height:20px;background:#ffffff;border-radius:3px"></div>
<div class="t" style="left:922px;top:459.0px;font-size:14px;line-height:20px;color:#d6d6d6;letter-spacing:-0.15px;">HDTV-2160p</div>
<div class="r" style="left:1235px;top:464.4px;width:12px;height:1.6px;background:#cdcdcd;"></div>
<div class="r" style="left:1235px;top:468.79999999999995px;width:12px;height:1.6px;background:#cdcdcd;"></div>
<div class="r" style="left:1235px;top:473.2px;width:12px;height:1.6px;background:#cdcdcd;"></div>
<div class="r" style="left:882px;top:494px;width:380px;height:32px;background:#333;border:1px solid #aaa;box-sizing:border-box;border-radius:4px"></div>
<div class="r" style="left:893px;top:500.0px;width:20px;height:20px;background:#5d9cec;border-radius:3px"></div>
<svg class="r" style="left:893px;top:500.0px;" width="20" height="20" viewBox="0 0 20 20"><path d="M4.4 10.4 L8.8 13.7 L15.9 6" fill="none" stroke="#fff" stroke-width="1.7"/></svg>
<div class="t" style="left:922px;top:499.0px;font-size:14px;line-height:20px;color:#d6d6d6;letter-spacing:-0.13px;">Bluray-1080p</div>
<div class="r" style="left:1235px;top:504.4px;width:12px;height:1.6px;background:#cdcdcd;"></div>
<div class="r" style="left:1235px;top:508.79999999999995px;width:12px;height:1.6px;background:#cdcdcd;"></div>
<div class="r" style="left:1235px;top:513.1999999999999px;width:12px;height:1.6px;background:#cdcdcd;"></div>
<div class="tagrow" style="right:325px;top:502.5px"><span class="tag">Remux-1080p</span><span class="tag">Bluray-1080p</span></div>
<div class="r" style="left:882px;top:534px;width:380px;height:44px;background:#333;border:1px solid #aaa;box-sizing:border-box;border-radius:4px"></div>
<div class="r" style="left:893px;top:546.0px;width:20px;height:20px;background:#5d9cec;border-radius:3px"></div>
<svg class="r" style="left:893px;top:546.0px;" width="20" height="20" viewBox="0 0 20 20"><path d="M4.4 10.4 L8.8 13.7 L15.9 6" fill="none" stroke="#fff" stroke-width="1.7"/></svg>
<div class="t" style="left:922px;top:545.0px;font-size:14px;line-height:20px;color:#d6d6d6;letter-spacing:-0.4px;">WEB 1080p</div>
<div class="r" style="left:1235px;top:550.4px;width:12px;height:1.6px;background:#cdcdcd;"></div>
<div class="r" style="left:1235px;top:554.8px;width:12px;height:1.6px;background:#cdcdcd;"></div>
<div class="r" style="left:1235px;top:559.1999999999999px;width:12px;height:1.6px;background:#cdcdcd;"></div>
<div class="tagrow" style="right:325px;top:539.0px"><span class="tag">WEBRip-1080p</span><span class="tag">WEBDL-1080p</span></div>
<div class="tagrow" style="right:325px;top:558.0px"><span class="tag">HDTV-1080p</span></div>
<div class="r" style="left:882px;top:586px;width:380px;height:32px;background:#333;border:1px solid #aaa;box-sizing:border-box;border-radius:4px"></div>
<div class="r" style="left:893px;top:592.0px;width:20px;height:20px;background:#5d9cec;border-radius:3px"></div>
<svg class="r" style="left:893px;top:592.0px;" width="20" height="20" viewBox="0 0 20 20"><path d="M4.4 10.4 L8.8 13.7 L15.9 6" fill="none" stroke="#fff" stroke-width="1.7"/></svg>
<div class="t" style="left:922px;top:591.0px;font-size:14px;line-height:20px;color:#d6d6d6;letter-spacing:-0.18px;">Bluray-720p</div>
<div class="r" style="left:1235px;top:596.4px;width:12px;height:1.6px;background:#cdcdcd;"></div>
<div class="r" style="left:1235px;top:600.8px;width:12px;height:1.6px;background:#cdcdcd;"></div>
<div class="r" style="left:1235px;top:605.1999999999999px;width:12px;height:1.6px;background:#cdcdcd;"></div>
<div class="r" style="left:882px;top:626px;width:380px;height:32px;background:#333;border:1px solid #aaa;box-sizing:border-box;border-radius:4px"></div>
<div class="r" style="left:893px;top:632.0px;width:20px;height:20px;background:#5d9cec;border-radius:3px"></div>
<svg class="r" style="left:893px;top:632.0px;" width="20" height="20" viewBox="0 0 20 20"><path d="M4.4 10.4 L8.8 13.7 L15.9 6" fill="none" stroke="#fff" stroke-width="1.7"/></svg>
<div class="t" style="left:922px;top:631.0px;font-size:14px;line-height:20px;color:#d6d6d6;letter-spacing:-0.4px;">WEB 720p</div>
<div class="r" style="left:1235px;top:636.4px;width:12px;height:1.6px;background:#cdcdcd;"></div>
<div class="r" style="left:1235px;top:640.8px;width:12px;height:1.6px;background:#cdcdcd;"></div>
<div class="r" style="left:1235px;top:645.1999999999999px;width:12px;height:1.6px;background:#cdcdcd;"></div>
<div class="tagrow" style="right:325px;top:634.5px"><span class="tag">WEBRip-720p</span><span class="tag">WEBDL-720p</span><span class="tag">HDTV-720p</span></div>
<div class="r" style="left:882px;top:666px;width:380px;height:32px;background:#333;border:1px solid #aaa;box-sizing:border-box;border-radius:4px"></div>
<div class="r" style="left:893px;top:672.0px;width:20px;height:20px;background:#5d9cec;border-radius:3px"></div>
<svg class="r" style="left:893px;top:672.0px;" width="20" height="20" viewBox="0 0 20 20"><path d="M4.4 10.4 L8.8 13.7 L15.9 6" fill="none" stroke="#fff" stroke-width="1.7"/></svg>
<div class="t" style="left:922px;top:671.0px;font-size:14px;line-height:20px;color:#d6d6d6;letter-spacing:-0.18px;">Bluray-576p</div>
<div class="r" style="left:1235px;top:676.4px;width:12px;height:1.6px;background:#cdcdcd;"></div>
<div class="r" style="left:1235px;top:680.8px;width:12px;height:1.6px;background:#cdcdcd;"></div>
<div class="r" style="left:1235px;top:685.1999999999999px;width:12px;height:1.6px;background:#cdcdcd;"></div>
<div class="r" style="left:882px;top:706px;width:380px;height:32px;background:#333;border:1px solid #aaa;box-sizing:border-box;border-radius:4px"></div>
<div class="r" style="left:893px;top:712.0px;width:20px;height:20px;background:#5d9cec;border-radius:3px"></div>
<svg class="r" style="left:893px;top:712.0px;" width="20" height="20" viewBox="0 0 20 20"><path d="M4.4 10.4 L8.8 13.7 L15.9 6" fill="none" stroke="#fff" stroke-width="1.7"/></svg>
<div class="t" style="left:922px;top:711.0px;font-size:14px;line-height:20px;color:#d6d6d6;letter-spacing:-0.18px;">Bluray-480p</div>
<div class="r" style="left:1235px;top:716.4px;width:12px;height:1.6px;background:#cdcdcd;"></div>
<div class="r" style="left:1235px;top:720.8px;width:12px;height:1.6px;background:#cdcdcd;"></div>
<div class="r" style="left:1235px;top:725.1999999999999px;width:12px;height:1.6px;background:#cdcdcd;"></div>
<div class="r" style="left:882px;top:746px;width:380px;height:32px;background:#333;border:1px solid #aaa;box-sizing:border-box;border-radius:4px"></div>
<div class="r" style="left:893px;top:752.0px;width:20px;height:20px;background:#5d9cec;border-radius:3px"></div>
<svg class="r" style="left:893px;top:752.0px;" width="20" height="20" viewBox="0 0 20 20"><path d="M4.4 10.4 L8.8 13.7 L15.9 6" fill="none" stroke="#fff" stroke-width="1.7"/></svg>
<div class="t" style="left:922px;top:751.0px;font-size:14px;line-height:20px;color:#d6d6d6;letter-spacing:-0.4px;">WEB 480p</div>
<div class="r" style="left:1235px;top:756.4px;width:12px;height:1.6px;background:#cdcdcd;"></div>
<div class="r" style="left:1235px;top:760.8px;width:12px;height:1.6px;background:#cdcdcd;"></div>
<div class="r" style="left:1235px;top:765.1999999999999px;width:12px;height:1.6px;background:#cdcdcd;"></div>
<div class="tagrow" style="right:325px;top:754.5px"><span class="tag">WEBRip-480p</span><span class="tag">WEBDL-480p</span></div>
<div class="r" style="left:882px;top:786px;width:380px;height:32px;background:#333;border:1px solid #aaa;box-sizing:border-box;border-radius:4px"></div>
<div class="r" style="left:893px;top:792.0px;width:20px;height:20px;background:#5d9cec;border-radius:3px"></div>
<svg class="r" style="left:893px;top:792.0px;" width="20" height="20" viewBox="0 0 20 20"><path d="M4.4 10.4 L8.8 13.7 L15.9 6" fill="none" stroke="#fff" stroke-width="1.7"/></svg>
<div class="t" style="left:922px;top:791.0px;font-size:14px;line-height:20px;color:#d6d6d6;letter-spacing:-0.8px;">DVD</div>
<div class="r" style="left:1235px;top:796.4px;width:12px;height:1.6px;background:#cdcdcd;"></div>
<div class="r" style="left:1235px;top:800.8px;width:12px;height:1.6px;background:#cdcdcd;"></div>
<div class="r" style="left:1235px;top:805.1999999999999px;width:12px;height:1.6px;background:#cdcdcd;"></div>
<div class="r" style="left:882px;top:826px;width:380px;height:32px;background:#333;border:1px solid #aaa;box-sizing:border-box;border-radius:4px"></div>
<div class="r" style="left:893px;top:832.0px;width:20px;height:20px;background:#5d9cec;border-radius:3px"></div>
<svg class="r" style="left:893px;top:832.0px;" width="20" height="20" viewBox="0 0 20 20"><path d="M4.4 10.4 L8.8 13.7 L15.9 6" fill="none" stroke="#fff" stroke-width="1.7"/></svg>
<div class="t" style="left:922px;top:831.0px;font-size:14px;line-height:20px;color:#d6d6d6;letter-spacing:-0.9px;">SDTV</div>
<div class="r" style="left:1235px;top:836.4px;width:12px;height:1.6px;background:#cdcdcd;"></div>
<div class="r" style="left:1235px;top:840.8px;width:12px;height:1.6px;background:#cdcdcd;"></div>
<div class="r" style="left:1235px;top:845.1999999999999px;width:12px;height:1.6px;background:#cdcdcd;"></div>
<div class="r" style="left:882px;top:866px;width:380px;height:32px;background:#333;border:1px solid #aaa;box-sizing:border-box;border-radius:4px"></div>
<div class="r" style="left:893px;top:872.0px;width:20px;height:20px;background:#ffffff;border-radius:3px"></div>
<div class="t" style="left:922px;top:871.0px;font-size:14px;line-height:20px;color:#d6d6d6;letter-spacing:-0.7px;">DVD-R</div>
<div class="r" style="left:1235px;top:876.4px;width:12px;height:1.6px;background:#cdcdcd;"></div>
<div class="r" style="left:1235px;top:880.8px;width:12px;height:1.6px;background:#cdcdcd;"></div>
<div class="r" style="left:1235px;top:885.1999999999999px;width:12px;height:1.6px;background:#cdcdcd;"></div>
<div class="r" style="left:882px;top:906px;width:380px;height:32px;background:#333;border:1px solid #aaa;box-sizing:border-box;border-radius:4px"></div>
<div class="r" style="left:893px;top:912.0px;width:20px;height:20px;background:#ffffff;border-radius:3px"></div>
<div class="t" style="left:922px;top:911.0px;font-size:14px;line-height:20px;color:#d6d6d6;letter-spacing:-0.7px;">DVDSCR</div>
<div class="r" style="left:1235px;top:916.4px;width:12px;height:1.6px;background:#cdcdcd;"></div>
<div class="r" style="left:1235px;top:920.8px;width:12px;height:1.6px;background:#cdcdcd;"></div>
<div class="r" style="left:1235px;top:925.1999999999999px;width:12px;height:1.6px;background:#cdcdcd;"></div>
<div class="r" style="left:882px;top:946px;width:380px;height:32px;background:#333;border:1px solid #aaa;box-sizing:border-box;border-radius:4px"></div>
<div class="r" style="left:893px;top:952.0px;width:20px;height:20px;background:#ffffff;border-radius:3px"></div>
<div class="t" style="left:922px;top:951.0px;font-size:14px;line-height:20px;color:#d6d6d6;letter-spacing:-0.7px;">REGIONAL</div>
<div class="r" style="left:1235px;top:956.4px;width:12px;height:1.6px;background:#cdcdcd;"></div>
<div class="r" style="left:1235px;top:960.8px;width:12px;height:1.6px;background:#cdcdcd;"></div>
<div class="r" style="left:1235px;top:965.1999999999999px;width:12px;height:1.6px;background:#cdcdcd;"></div>
<div class="r" style="left:882px;top:986px;width:380px;height:32px;background:#333;border:1px solid #aaa;box-sizing:border-box;border-radius:4px"></div>
<div class="r" style="left:893px;top:992.0px;width:20px;height:20px;background:#ffffff;border-radius:3px"></div>
<div class="t" style="left:922px;top:991.0px;font-size:14px;line-height:20px;color:#d6d6d6;letter-spacing:-0.7px;">TELECINE</div>
<div class="r" style="left:1235px;top:996.4px;width:12px;height:1.6px;background:#cdcdcd;"></div>
<div class="r" style="left:1235px;top:1000.8px;width:12px;height:1.6px;background:#cdcdcd;"></div>
<div class="r" style="left:1235px;top:1005.1999999999999px;width:12px;height:1.6px;background:#cdcdcd;"></div>
<div class="r" style="left:882px;top:1026px;width:380px;height:32px;background:#333;border:1px solid #aaa;box-sizing:border-box;border-radius:4px"></div>
<div class="r" style="left:893px;top:1032.0px;width:20px;height:20px;background:#ffffff;border-radius:3px"></div>
<div class="t" style="left:922px;top:1031.0px;font-size:14px;line-height:20px;color:#d6d6d6;letter-spacing:-0.7px;">TELESYNC</div>
<div class="r" style="left:1235px;top:1036.4px;width:12px;height:1.6px;background:#cdcdcd;"></div>
<div class="r" style="left:1235px;top:1040.8000000000002px;width:12px;height:1.6px;background:#cdcdcd;"></div>
<div class="r" style="left:1235px;top:1045.2px;width:12px;height:1.6px;background:#cdcdcd;"></div>
<div class="r" style="left:882px;top:1066px;width:380px;height:32px;background:#333;border:1px solid #aaa;box-sizing:border-box;border-radius:4px"></div>
<div class="r" style="left:893px;top:1072.0px;width:20px;height:20px;background:#ffffff;border-radius:3px"></div>
<div class="t" style="left:922px;top:1071.0px;font-size:14px;line-height:20px;color:#d6d6d6;letter-spacing:-0.7px;">CAM</div>
<div class="r" style="left:1235px;top:1076.4px;width:12px;height:1.6px;background:#cdcdcd;"></div>
<div class="r" style="left:1235px;top:1080.8000000000002px;width:12px;height:1.6px;background:#cdcdcd;"></div>
<div class="r" style="left:1235px;top:1085.2px;width:12px;height:1.6px;background:#cdcdcd;"></div>
<div class="r" style="left:882px;top:1106px;width:380px;height:32px;background:#333;border:1px solid #aaa;box-sizing:border-box;border-radius:4px"></div>
<div class="r" style="left:893px;top:1112.0px;width:20px;height:20px;background:#ffffff;border-radius:3px"></div>
<div class="t" style="left:922px;top:1111.0px;font-size:14px;line-height:20px;color:#d6d6d6;letter-spacing:-0.82px;">WORKPRINT</div>
<div class="r" style="left:1235px;top:1116.4px;width:12px;height:1.6px;background:#cdcdcd;"></div>
<div class="r" style="left:1235px;top:1120.8000000000002px;width:12px;height:1.6px;background:#cdcdcd;"></div>
<div class="r" style="left:1235px;top:1125.2px;width:12px;height:1.6px;background:#cdcdcd;"></div>
<div class="r" style="left:882px;top:1146px;width:380px;height:32px;background:#333;border:1px solid #aaa;box-sizing:border-box;border-radius:4px"></div>
<div class="r" style="left:893px;top:1152.0px;width:20px;height:20px;background:#ffffff;border-radius:3px"></div>
<div class="t" style="left:922px;top:1151.0px;font-size:14px;line-height:20px;color:#d6d6d6;">Unknown</div>
<div class="r" style="left:1235px;top:1156.4px;width:12px;height:1.6px;background:#cdcdcd;"></div>
<div class="r" style="left:1235px;top:1160.8000000000002px;width:12px;height:1.6px;background:#cdcdcd;"></div>
<div class="r" style="left:1235px;top:1165.2px;width:12px;height:1.6px;background:#cdcdcd;"></div>
</body></html>
